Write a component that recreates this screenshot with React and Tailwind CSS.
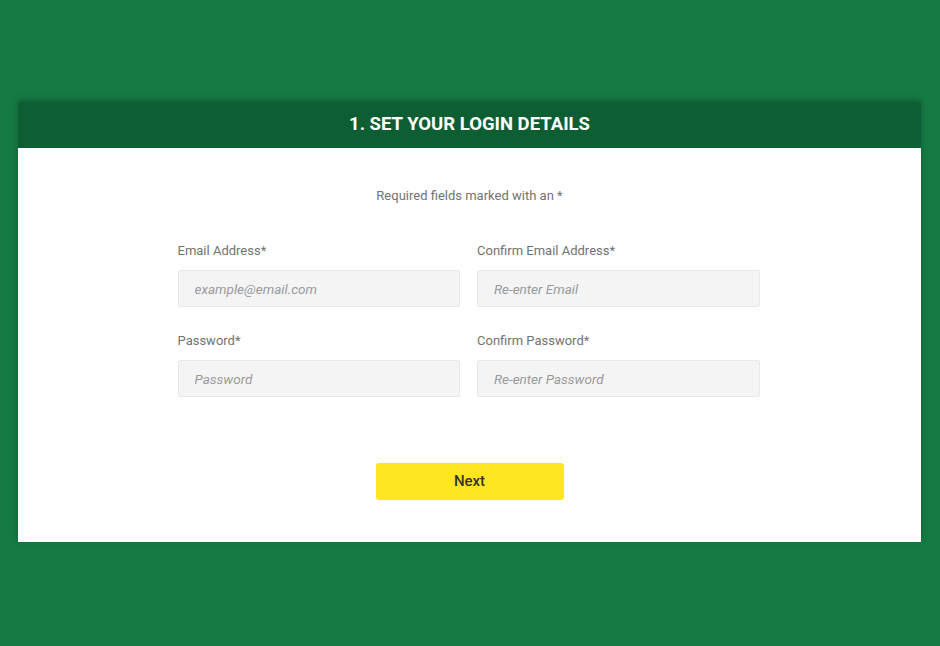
import React from "react";

const Field = ({ label, placeholder, type = "text" }) => (
  <div className="flex flex-col">
    <label className="text-[13px] leading-5 text-[#727272] mb-[9px]">{label}</label>
    <input
      type={type}
      placeholder={placeholder}
      className="h-[37px] w-full bg-[#f4f4f4] border border-[#e8e8e8] rounded-[2px] px-4 text-[13.5px] italic text-[#555] placeholder:text-[#9a9a9a] outline-none"
    />
  </div>
);

export default function App() {
  return (
    <div
      className="min-h-[646px] w-full bg-[#167a45] pt-[102px] pl-[18px] pr-[19px]"
      style={{ fontFamily: "Roboto, 'Liberation Sans', sans-serif" }}
    >
      <div className="shadow-[0_-2px_6px_rgba(0,0,0,0.25)]">
        {/* section header */}
        <div className="h-[46px] bg-[#0d5e32] flex items-center justify-center">
          <h2 className="text-white text-[18.5px] font-bold">
            1. SET YOUR LOGIN DETAILS
          </h2>
        </div>

        <div className="bg-white pt-[38px] pb-[42px] flex flex-col items-center">
          <p className="text-[13px] leading-5 text-[#727272]">Required fields marked with an *</p>

          <div className="mt-[35px] w-[582px] mr-[2px] grid grid-cols-2 gap-x-[17px] gap-y-[24px]">
            <Field label="Email Address*" placeholder="example@email.com" type="email" />
            <Field label="Confirm Email Address*" placeholder="Re-enter Email" type="email" />
            <Field label="Password*" placeholder="Password" type="password" />
            <Field label="Confirm Password*" placeholder="Re-enter Password" type="password" />
          </div>

          <button className="mt-[66px] w-[188px] h-[37px] bg-[#ffe620] rounded-[3px] text-[15px] font-medium text-[#333]">
            Next
          </button>
        </div>
      </div>
    </div>
  );
}
